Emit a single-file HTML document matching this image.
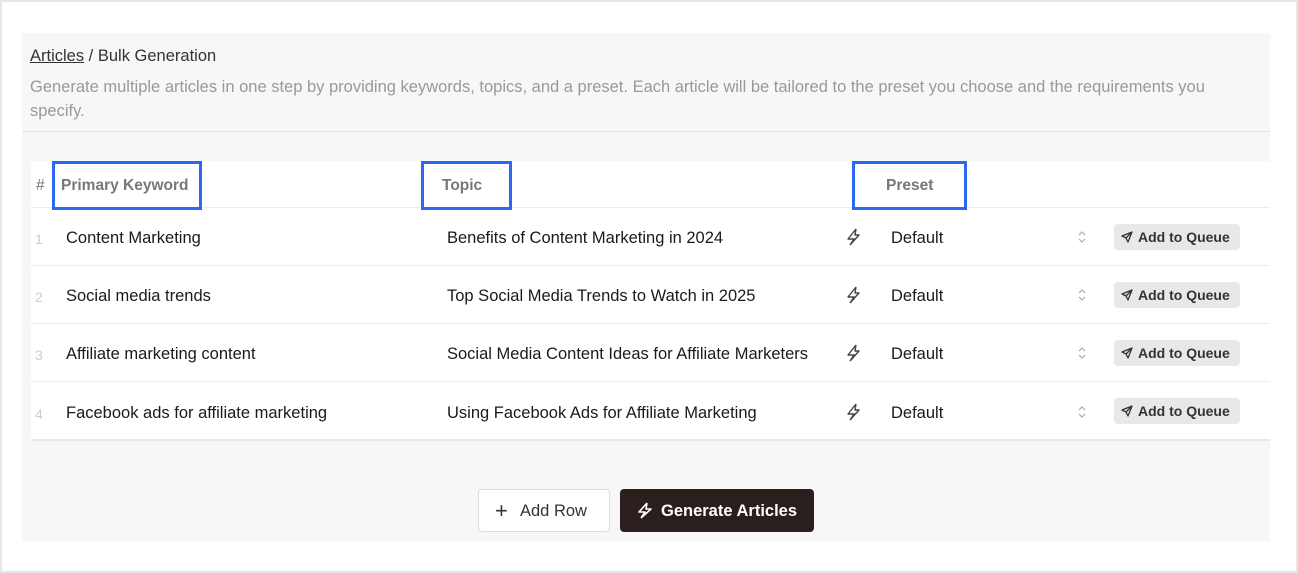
<!DOCTYPE html>
<html><head><meta charset="utf-8"><style>
*{margin:0;padding:0;box-sizing:border-box}
body{width:1298px;height:573px;background:#fff;font-family:"Liberation Sans",sans-serif;position:relative;overflow:hidden}
.frame{position:absolute;left:0;top:0;width:1298px;height:573px;border:2px solid #e6e6e6}
.panel{position:absolute;left:22px;top:33px;width:1248px;height:509px;background:#f7f7f7}
.a{position:absolute;white-space:nowrap}
.tbl{position:absolute;left:31px;top:161px;width:1239px;height:279px;background:#fff}
.line{position:absolute;left:31px;width:1239px;height:1px;background:#ececec}
.hd{color:#777;font-size:15.5px;top:177px}
.cell{font-size:16.5px;color:#1a1a1a}
.num{color:#ccc;font-size:14px}
.blue{position:absolute;border:3.5px solid #2b67f0}
.q{position:absolute;left:1114px;width:126px;height:26px;background:#e8e8e8;border-radius:4px;font-size:14px;color:#333;padding-left:24px;line-height:26px;font-weight:bold}
.q svg{position:absolute;left:7px;top:7px}
</style></head><body>
<div class="frame"></div>
<div class="panel"></div>
<div class="a" style="left:30px;top:47px;font-size:16.5px;color:#333"><span style="text-decoration:underline">Articles</span> / Bulk Generation</div>
<div class="a" style="left:30px;top:75px;font-size:16.5px;color:#999;line-height:24px;white-space:normal;width:1215px">Generate multiple articles in one step by providing keywords, topics, and a preset. Each article will be tailored to the preset you choose and the requirements you specify.</div>
<div style="position:absolute;left:22px;top:131px;width:1248px;height:1px;background:#e2e2e2"></div>
<div class="tbl"></div>
<div class="line" style="top:207px"></div>
<div class="line" style="top:265px"></div>
<div class="line" style="top:323px"></div>
<div class="line" style="top:381px"></div>
<div style="position:absolute;left:31px;top:439px;width:1239px;height:2px;background:#e8e8e8"></div>
<div class="a hd" style="left:36px">#</div>
<div class="a hd" style="left:61px;font-weight:bold">Primary Keyword</div>
<div class="a hd" style="left:442px;font-weight:bold">Topic</div>
<div class="a hd" style="left:886px;font-weight:bold">Preset</div>
<div class="blue" style="left:52px;top:161px;width:150px;height:49px"></div>
<div class="blue" style="left:421px;top:161px;width:91px;height:49px"></div>
<div class="blue" style="left:852px;top:161px;width:115px;height:49px"></div>

<div class="a num" style="left:35px;top:231px">1</div>
<div class="a num" style="left:35px;top:289px">2</div>
<div class="a num" style="left:35px;top:347px">3</div>
<div class="a num" style="left:35px;top:406px">4</div>
<div class="a cell" style="left:66px;top:229px">Content Marketing</div>
<div class="a cell" style="left:66px;top:287px">Social media trends</div>
<div class="a cell" style="left:66px;top:345px">Affiliate marketing content</div>
<div class="a cell" style="left:66px;top:404px">Facebook ads for affiliate marketing</div>
<div class="a cell" style="left:447px;top:229px">Benefits of Content Marketing in 2024</div>
<div class="a cell" style="left:447px;top:287px">Top Social Media Trends to Watch in 2025</div>
<div class="a cell" style="left:447px;top:345px">Social Media Content Ideas for Affiliate Marketers</div>
<div class="a cell" style="left:447px;top:404px">Using Facebook Ads for Affiliate Marketing</div>

<svg style="position:absolute;left:0;top:0" width="1298" height="573">
<defs><g id="b"><path d="M5 0 L-3 10 H3 L-1 16 M5 0 L4 6 H8 L-1 16" fill="none" stroke="#444" stroke-width="1.4" stroke-linejoin="round"/></g>
<g id="c"><path d="M-3 -2 L0 -5 L3 -2 M-3 2 L0 5 L3 2" fill="none" stroke="#aaa" stroke-width="1.2"/></g></defs>
<use href="#c" x="1082" y="237"/><use href="#c" x="1082" y="295"/><use href="#c" x="1082" y="353"/><use href="#c" x="1082" y="412"/>
<use href="#b" x="851" y="229"/><use href="#b" x="851" y="287"/><use href="#b" x="851" y="345"/><use href="#b" x="851" y="404"/>
</svg>
<div class="a cell" style="left:891px;top:229px">Default</div>
<div class="a cell" style="left:891px;top:287px">Default</div>
<div class="a cell" style="left:891px;top:345px">Default</div>
<div class="a cell" style="left:891px;top:404px">Default</div>
<div class="q" style="top:224px"><svg width="12" height="12" viewBox="0 0 12 12"><path d="M11 1 L1 5 L5 7 L7 11 Z M11 1 L5 7" fill="none" stroke="#333" stroke-width="1.3" stroke-linejoin="round"/></svg>Add to Queue</div>
<div class="q" style="top:282px"><svg width="12" height="12" viewBox="0 0 12 12"><path d="M11 1 L1 5 L5 7 L7 11 Z M11 1 L5 7" fill="none" stroke="#333" stroke-width="1.3" stroke-linejoin="round"/></svg>Add to Queue</div>
<div class="q" style="top:340px"><svg width="12" height="12" viewBox="0 0 12 12"><path d="M11 1 L1 5 L5 7 L7 11 Z M11 1 L5 7" fill="none" stroke="#333" stroke-width="1.3" stroke-linejoin="round"/></svg>Add to Queue</div>
<div class="q" style="top:398px"><svg width="12" height="12" viewBox="0 0 12 12"><path d="M11 1 L1 5 L5 7 L7 11 Z M11 1 L5 7" fill="none" stroke="#333" stroke-width="1.3" stroke-linejoin="round"/></svg>Add to Queue</div>

<div style="position:absolute;left:478px;top:489px;width:132px;height:43px;background:#fff;border:1px solid #ddd;border-radius:4px;font-size:16.5px;color:#333;line-height:43px;padding-left:41px">Add Row
<span style="position:absolute;left:16px;top:-1px;font-size:22px;font-weight:300">+</span></div>
<div style="position:absolute;left:620px;top:489px;width:194px;height:43px;background:#2b1f1d;border-radius:4px;font-size:16.5px;color:#fff;font-weight:bold;line-height:45px;padding-left:41px">Generate Articles
<svg style="position:absolute;left:18px;top:13px" width="14" height="18"><path d="M9 1 L1 10 H7 L3 16 M9 1 L8 7 H13 L3 16" fill="none" stroke="#fff" stroke-width="1.6" stroke-linejoin="round"/></svg></div>
</body></html>
